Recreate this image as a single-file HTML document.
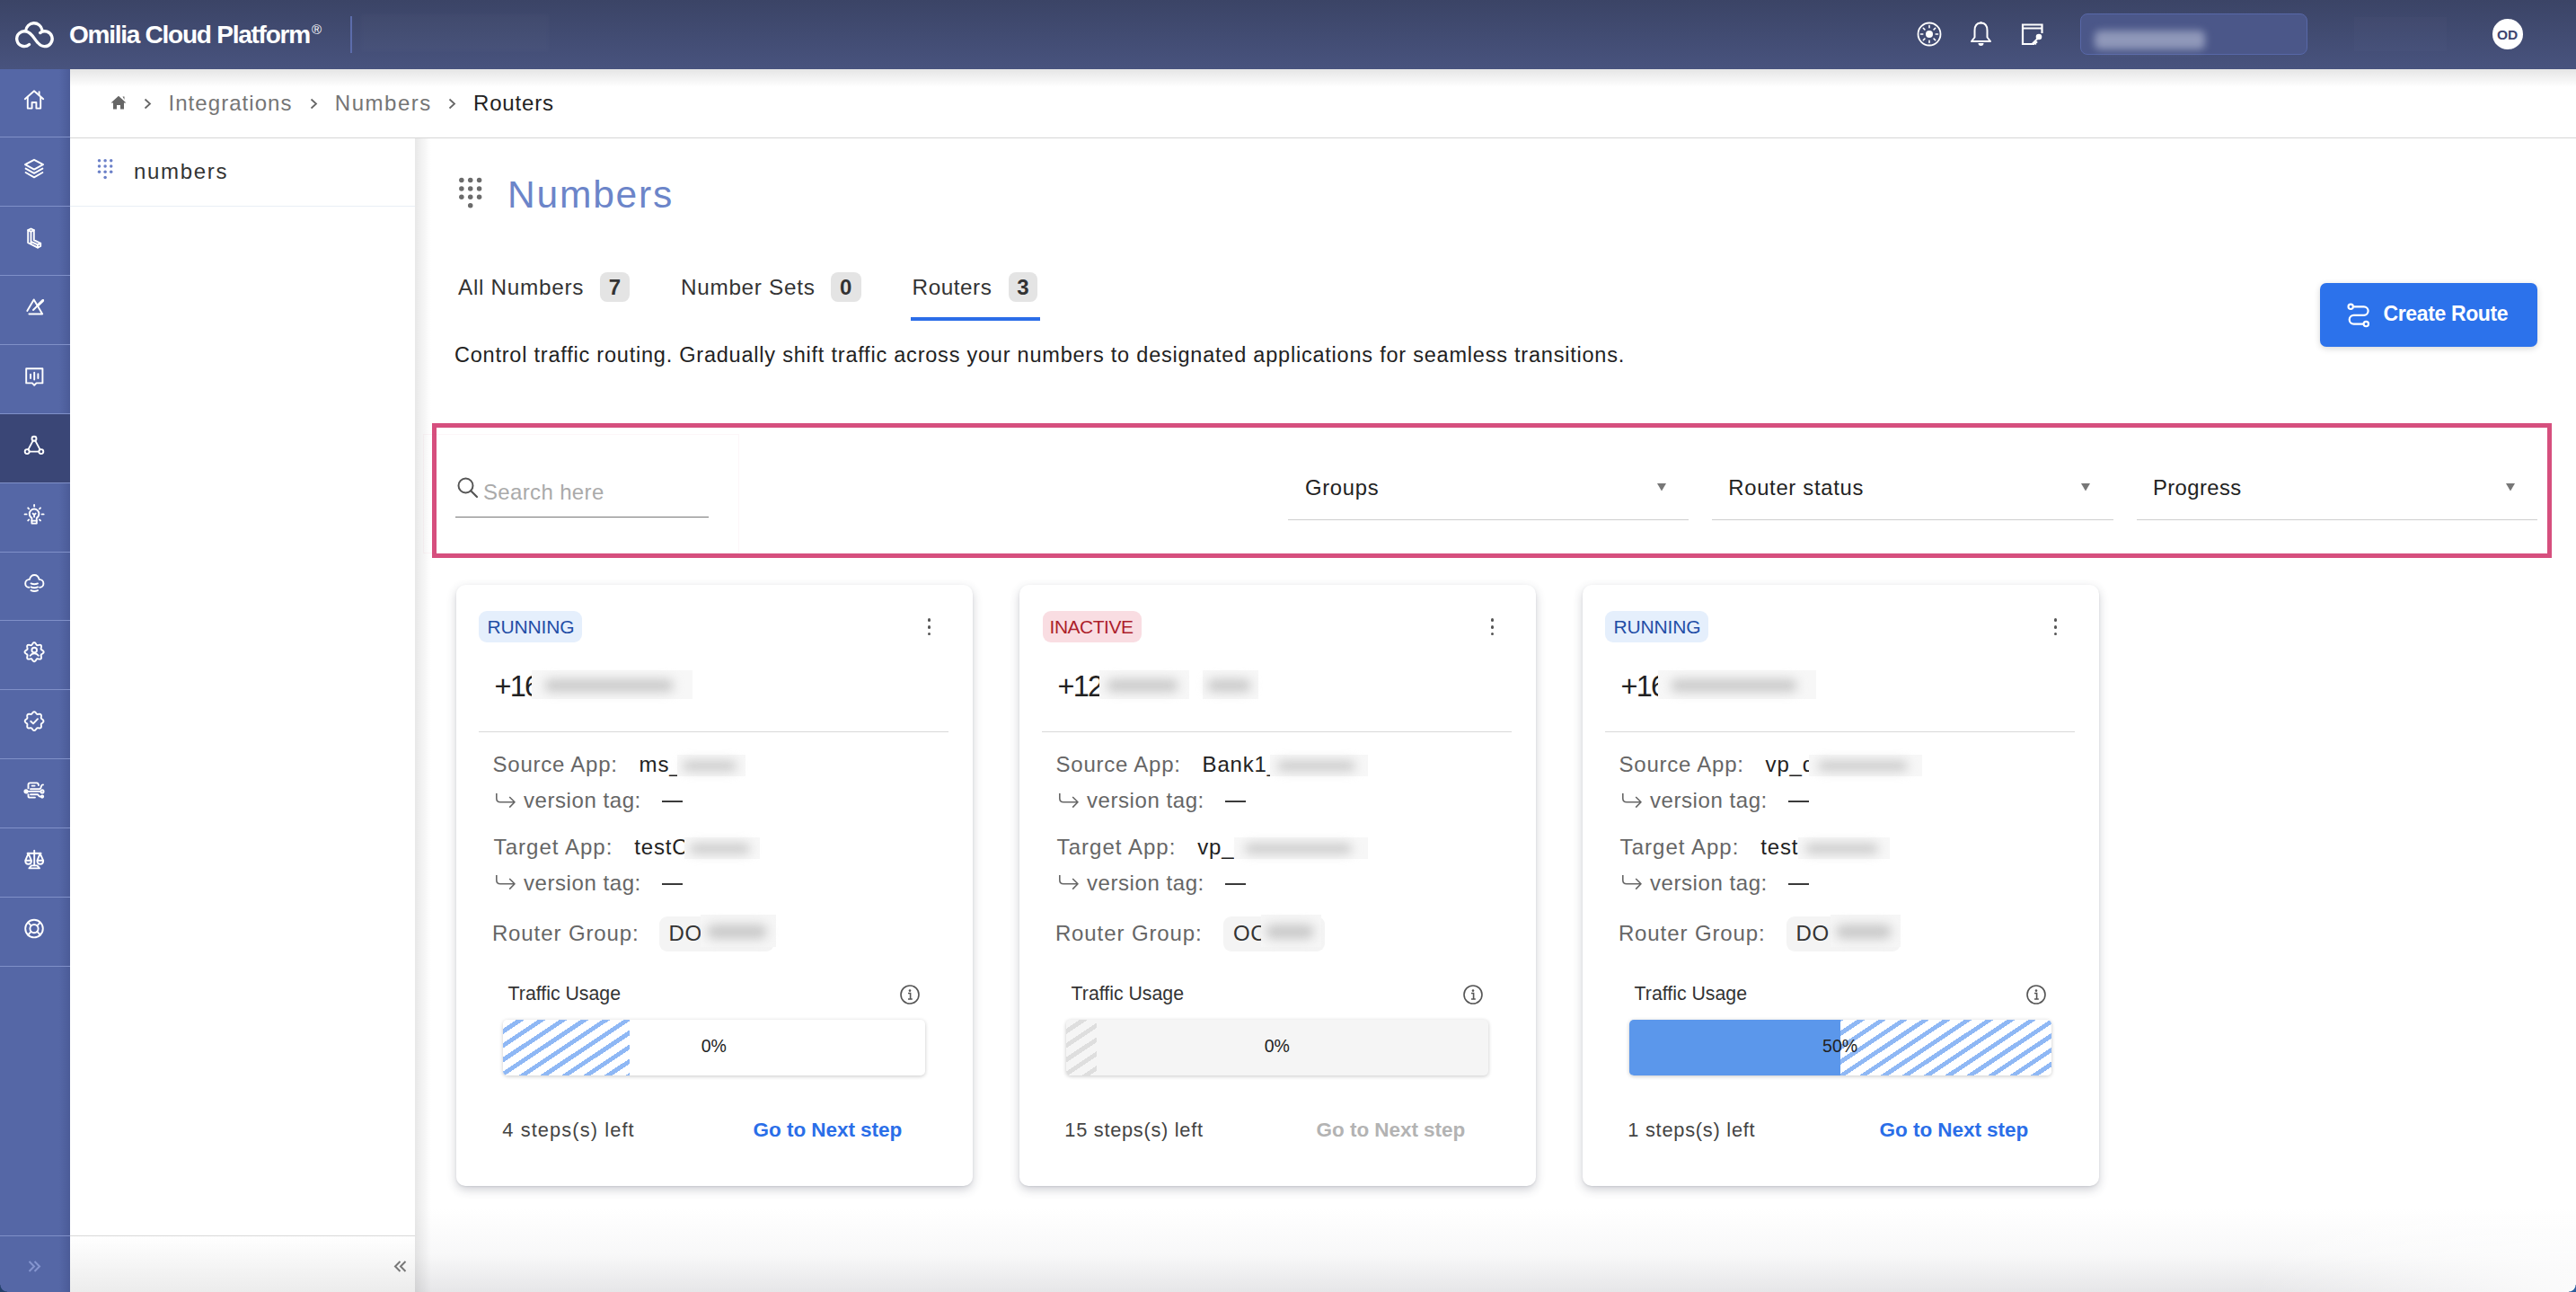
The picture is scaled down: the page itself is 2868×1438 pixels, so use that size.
<!DOCTYPE html>
<html><head><meta charset="utf-8"><style>
html,body{margin:0;padding:0;width:2868px;height:1438px;overflow:hidden;background:#fff}
body{position:relative;font-family:"Liberation Sans", sans-serif}
.t{position:absolute;white-space:nowrap;line-height:1}
.r{position:absolute}
</style></head><body>
<div class="r" style="left:462.0px;top:1345.0px;width:2406.0px;height:93.0px;background:linear-gradient(180deg,rgba(232,232,234,0) 0%,rgba(232,232,234,0.3) 55%,rgba(230,230,232,1) 100%)"></div>
<div class="r" style="left:2500.0px;top:1290.0px;width:368.0px;height:148.0px;background:radial-gradient(ellipse 360px 146px at 100% 100%,rgba(255,255,255,0.85),rgba(255,255,255,0) 100%)"></div>
<div class="r" style="left:0.0px;top:0.0px;width:2868.0px;height:77.0px;background:linear-gradient(180deg,#3b4466 0%,#48537e 100%)"></div>
<div class="r" style="left:78.0px;top:77.0px;width:2790.0px;height:20.0px;background:linear-gradient(180deg,rgba(0,0,0,0.10),rgba(0,0,0,0))"></div>
<div class="r" style="left:0.0px;top:77.0px;width:78.0px;height:1361.0px;background:#5567a6"></div>
<div class="r" style="left:66.0px;top:77.0px;width:12.0px;height:1361.0px;background:linear-gradient(90deg,rgba(40,50,100,0),rgba(40,50,100,0.22))"></div>
<div class="r" style="left:0.0px;top:152.4px;width:78.0px;height:1.0px;background:#8090c8"></div>
<div class="r" style="left:0.0px;top:229.3px;width:78.0px;height:1.0px;background:#8090c8"></div>
<div class="r" style="left:0.0px;top:306.1px;width:78.0px;height:1.0px;background:#8090c8"></div>
<div class="r" style="left:0.0px;top:383.0px;width:78.0px;height:1.0px;background:#8090c8"></div>
<div class="r" style="left:0.0px;top:459.9px;width:78.0px;height:1.0px;background:#8090c8"></div>
<div class="r" style="left:0.0px;top:461.2px;width:78.0px;height:76.9px;background:#3a4676"></div>
<div class="r" style="left:0.0px;top:536.7px;width:78.0px;height:1.0px;background:#8090c8"></div>
<div class="r" style="left:0.0px;top:613.5px;width:78.0px;height:1.0px;background:#8090c8"></div>
<div class="r" style="left:0.0px;top:690.4px;width:78.0px;height:1.0px;background:#8090c8"></div>
<div class="r" style="left:0.0px;top:767.2px;width:78.0px;height:1.0px;background:#8090c8"></div>
<div class="r" style="left:0.0px;top:844.1px;width:78.0px;height:1.0px;background:#8090c8"></div>
<div class="r" style="left:0.0px;top:921.0px;width:78.0px;height:1.0px;background:#8090c8"></div>
<div class="r" style="left:0.0px;top:997.8px;width:78.0px;height:1.0px;background:#8090c8"></div>
<div class="r" style="left:0.0px;top:1074.6px;width:78.0px;height:1.0px;background:#8090c8"></div>
<div class="r" style="left:0.0px;top:1375.0px;width:78.0px;height:1.0px;background:#8090c8"></div>
<div class="r" style="left:78.0px;top:153.0px;width:2790.0px;height:1.0px;background:#d6d6d6"></div>
<div class="r" style="left:78.0px;top:229.0px;width:384.0px;height:1.0px;background:#e9eef5"></div>
<div class="r" style="left:78.0px;top:1375.0px;width:384.0px;height:1.0px;background:#d9d9d9"></div>
<div class="r" style="left:78.0px;top:1376.0px;width:384.0px;height:62.0px;background:linear-gradient(180deg,#ffffff,#ececec)"></div>
<div class="r" style="left:462.0px;top:154.0px;width:18.0px;height:1284.0px;background:linear-gradient(90deg,rgba(0,0,0,0.09),rgba(0,0,0,0))"></div>
<div class="t" style="left:77.0px;top:24.8px;font-size:28px;color:#fff;font-weight:700;letter-spacing:-1.25px;">Omilia Cloud Platform</div>
<div class="t" style="left:347.0px;top:24.8px;font-size:15px;color:#fff;font-weight:400;letter-spacing:0.00px;">&reg;</div>
<div class="r" style="left:390.0px;top:18.0px;width:1.5px;height:40.5px;background:#5c6cab"></div>
<div class="r" style="left:402.0px;top:16.0px;width:209.0px;height:41.0px;background:rgba(255,255,255,0.02);filter:blur(2px)"></div>
<div class="r" style="left:2315.5px;top:14.7px;width:253.0px;height:45.9px;background:#4b5789;border:1px solid #5868a8;border-radius:8px;box-sizing:border-box"></div>
<div class="r" style="left:2332.0px;top:34.0px;width:123.0px;height:21.0px;background:rgba(200,205,225,0.55);filter:blur(4px);border-radius:6px"></div>
<div class="r" style="left:2621.0px;top:19.0px;width:103.0px;height:38.0px;background:rgba(255,255,255,0.015)"></div>
<div class="r" style="left:2775.2px;top:21.2px;width:33.6px;height:33.6px;background:#fff;border-radius:50%"></div>
<div class="t" style="left:2780.0px;top:31.2px;font-size:15.5px;color:#3e4670;font-weight:700;letter-spacing:0.00px;">OD</div>
<div class="t" style="left:187.5px;top:103.3px;font-size:24px;color:#757575;font-weight:400;letter-spacing:1.05px;">Integrations</div>
<div class="t" style="left:372.8px;top:103.3px;font-size:24px;color:#757575;font-weight:400;letter-spacing:1.53px;">Numbers</div>
<div class="t" style="left:527.0px;top:103.3px;font-size:24px;color:#222;font-weight:400;letter-spacing:0.83px;">Routers</div>
<div class="t" style="left:149.0px;top:179.1px;font-size:24px;color:#333;font-weight:400;letter-spacing:1.67px;">numbers</div>
<div class="t" style="left:565.0px;top:196.3px;font-size:42.5px;color:#6c85c9;font-weight:400;letter-spacing:1.80px;">Numbers</div>
<div class="t" style="left:510.0px;top:308.0px;font-size:24.3px;color:#333;font-weight:400;letter-spacing:0.70px;">All Numbers</div>
<div class="t" style="left:758.0px;top:308.0px;font-size:24.3px;color:#333;font-weight:400;letter-spacing:0.70px;">Number Sets</div>
<div class="t" style="left:1015.6px;top:308.0px;font-size:24.3px;color:#333;font-weight:400;letter-spacing:0.52px;">Routers</div>
<div class="r" style="left:668.0px;top:303.0px;width:33.0px;height:33.3px;background:#e4e4e4;border-radius:8px"></div>
<div class="t" style="left:668px;top:308.3px;width:33px;text-align:center;font-size:24px;color:#333;font-weight:700">7</div>
<div class="r" style="left:925.0px;top:303.0px;width:33.6px;height:33.3px;background:#e4e4e4;border-radius:8px"></div>
<div class="t" style="left:925px;top:308.3px;width:33.60000000000002px;text-align:center;font-size:24px;color:#333;font-weight:700">0</div>
<div class="r" style="left:1123.0px;top:303.0px;width:32.0px;height:33.3px;background:#e4e4e4;border-radius:8px"></div>
<div class="t" style="left:1123px;top:308.3px;width:32px;text-align:center;font-size:24px;color:#333;font-weight:700">3</div>
<div class="r" style="left:1014.0px;top:352.5px;width:144.0px;height:4.5px;background:#2b6de8"></div>
<div class="t" style="left:506.0px;top:384.1px;font-size:23.5px;color:#222;font-weight:400;letter-spacing:0.78px;">Control traffic routing. Gradually shift traffic across your numbers to designated applications for seamless transitions.</div>
<div class="r" style="left:2582.8px;top:315.3px;width:242.0px;height:70.3px;background:#2c72eb;border-radius:7px;box-shadow:0 2px 7px rgba(0,0,0,0.16)"></div>
<div class="t" style="left:2653.5px;top:337.5px;font-size:23px;color:#fff;font-weight:700;letter-spacing:-0.37px;">Create Route</div>
<div class="r" style="left:480.5px;top:470.6px;width:2360.7px;height:150.4px;border:5px solid #d64f7e;box-sizing:border-box"></div>
<div class="r" style="left:470.5px;top:483.0px;width:352.2px;height:133.0px;border:1px solid rgba(214,79,126,0.05);box-sizing:border-box"></div>
<div class="t" style="left:538.0px;top:536.2px;font-size:24px;color:#aaa;font-weight:400;letter-spacing:0.35px;">Search here</div>
<div class="r" style="left:507.0px;top:574.8px;width:282.0px;height:1.2px;background:#777"></div>
<div class="r" style="left:1434.0px;top:577.6px;width:446.4px;height:1.2px;background:#cfcfcf"></div>
<div class="t" style="left:1453.0px;top:530.7px;font-size:23.8px;color:#222;font-weight:400;letter-spacing:0.72px;">Groups</div>
<svg class="r" style="left:1845.4px;top:538.0px;" width="10" height="9" viewBox="0 0 10 9"><path d="M0 0 H10 L5 8.5 Z" fill="#777"/></svg>
<div class="r" style="left:1906.0px;top:577.6px;width:446.6px;height:1.2px;background:#cfcfcf"></div>
<div class="t" style="left:1924.3px;top:530.7px;font-size:23.8px;color:#222;font-weight:400;letter-spacing:0.71px;">Router status</div>
<svg class="r" style="left:2317.0px;top:538.0px;" width="10" height="9" viewBox="0 0 10 9"><path d="M0 0 H10 L5 8.5 Z" fill="#777"/></svg>
<div class="r" style="left:2379.0px;top:577.6px;width:445.8px;height:1.2px;background:#cfcfcf"></div>
<div class="t" style="left:2397.0px;top:530.7px;font-size:23.8px;color:#222;font-weight:400;letter-spacing:0.41px;">Progress</div>
<svg class="r" style="left:2790.0px;top:538.0px;" width="10" height="9" viewBox="0 0 10 9"><path d="M0 0 H10 L5 8.5 Z" fill="#777"/></svg>
<div class="r" style="left:507.6px;top:651.0px;width:575.0px;height:668.8px;background:#fff;border-radius:10px;box-shadow:0 4px 11px rgba(50,55,75,0.24), 0 1px 2px rgba(50,55,75,0.10)"></div>
<div class="r" style="left:532.9px;top:680.0px;width:115.4px;height:34.8px;background:#e5effc;border-radius:9px"></div>
<div class="t" style="left:542.6px;top:686.7px;font-size:21px;color:#1f4ea6;font-weight:400;letter-spacing:-0.17px;">RUNNING</div>
<div class="r" style="left:1032.8px;top:688.4px;width:3.6px;height:3.6px;background:#555;border-radius:50%"></div>
<div class="r" style="left:1032.8px;top:696.0px;width:3.6px;height:3.6px;background:#555;border-radius:50%"></div>
<div class="r" style="left:1032.8px;top:703.6px;width:3.6px;height:3.6px;background:#555;border-radius:50%"></div>
<div class="t" style="left:550.6px;top:748.2px;font-size:32.5px;color:#222;font-weight:400;letter-spacing:-1.80px;">+16</div>
<div class="r" style="left:592.0px;top:746.0px;width:179.2px;height:32.0px;background:#f7f7f7;overflow:hidden"></div>
<div class="r" style="left:606.3px;top:755.6px;width:143.4px;height:14.4px;background:#c9c9c9;filter:blur(6px);border-radius:10px"></div>
<div class="r" style="left:532.9px;top:814.0px;width:522.7px;height:1.2px;background:#d9d9d9"></div>
<div class="t" style="left:548.6px;top:839.4px;font-size:24px;color:#666;font-weight:400;letter-spacing:0.76px;">Source App:</div>
<div class="t" style="left:711.6px;top:839.4px;font-size:24px;color:#222;font-weight:400;letter-spacing:0.80px;">ms_</div>
<div class="r" style="left:753.6px;top:840.0px;width:76.0px;height:23.7px;background:#f7f7f7;overflow:hidden"></div>
<div class="r" style="left:759.7px;top:847.1px;width:60.8px;height:10.7px;background:#c9c9c9;filter:blur(6px);border-radius:10px"></div>
<svg class="r" style="left:550.6px;top:881.5px;" width="24" height="20" viewBox="0 0 24 20"><path d="M1.8 1 V6.5 Q1.8 10.8 6 10.8 H22 M16.2 5 L22 10.8 L16.2 16.6" fill="none" stroke="#666" stroke-width="1.6" stroke-linejoin="round"/></svg>
<div class="t" style="left:583.0px;top:879.2px;font-size:24px;color:#666;font-weight:400;letter-spacing:0.56px;">version tag:</div>
<div class="r" style="left:737.4px;top:891.3px;width:22.2px;height:1.8px;background:#3a3a3a"></div>
<svg class="r" style="left:550.6px;top:973.0px;" width="24" height="20" viewBox="0 0 24 20"><path d="M1.8 1 V6.5 Q1.8 10.8 6 10.8 H22 M16.2 5 L22 10.8 L16.2 16.6" fill="none" stroke="#666" stroke-width="1.6" stroke-linejoin="round"/></svg>
<div class="t" style="left:583.0px;top:970.7px;font-size:24px;color:#666;font-weight:400;letter-spacing:0.56px;">version tag:</div>
<div class="r" style="left:737.4px;top:982.8px;width:22.2px;height:1.8px;background:#3a3a3a"></div>
<div class="t" style="left:549.6px;top:930.7px;font-size:24px;color:#666;font-weight:400;letter-spacing:1.04px;">Target App:</div>
<div class="t" style="left:706.3px;top:930.7px;font-size:24px;color:#222;font-weight:400;letter-spacing:0.80px;">testC</div>
<div class="r" style="left:761.6px;top:932.0px;width:84.0px;height:24.0px;background:#f7f7f7;overflow:hidden"></div>
<div class="r" style="left:768.3px;top:939.2px;width:67.2px;height:10.8px;background:#c9c9c9;filter:blur(6px);border-radius:10px"></div>
<div class="t" style="left:547.9px;top:1027.3px;font-size:24px;color:#666;font-weight:400;letter-spacing:0.90px;">Router Group:</div>
<div class="r" style="left:733.6px;top:1020.0px;width:128.0px;height:39.4px;background:#f4f4f4;border-radius:9px"></div>
<div class="t" style="left:744.6px;top:1027.3px;font-size:24px;color:#333;font-weight:400;letter-spacing:0.50px;">DO</div>
<div class="r" style="left:779.8px;top:1018.0px;width:83.8px;height:35.5px;background:#f6f6f6;overflow:hidden"></div>
<div class="r" style="left:786.5px;top:1028.7px;width:67.0px;height:16.0px;background:#c9c9c9;filter:blur(6px);border-radius:10px"></div>
<div class="t" style="left:565.6px;top:1095.5px;font-size:21.3px;color:#333;font-weight:400;letter-spacing:0.00px;">Traffic Usage</div>
<svg class="r" style="left:1001.6px;top:1095.5px;" width="22" height="22" viewBox="0 0 22 22"><circle cx="11" cy="11" r="10" fill="none" stroke="#555" stroke-width="1.6"/><circle cx="11" cy="6.6" r="1.3" fill="#555"/><path d="M9 9.5 H11.6 V16 M9 16 H13.8" fill="none" stroke="#555" stroke-width="1.6"/></svg>
<div class="r" style="left:559.6px;top:1135.0px;width:470.3px;height:62.4px;background:#fff;border-radius:5px;box-shadow:0 1px 4px rgba(0,0,0,0.22);overflow:hidden"></div>
<div class="r" style="left:559.6px;top:1135.0px;width:141.0px;height:62.4px;background:repeating-linear-gradient(146.4deg,#ffffff 0px,#ffffff 8.4px,#8fb8f5 8.4px,#8fb8f5 13.2px);border-radius:5px 0 0 5px"></div>
<div class="t" style="left:744.8px;width:100px;text-align:center;top:1155.3px;font-size:19.5px;color:#222">0%</div>
<div class="t" style="left:559.3px;top:1247.4px;font-size:21.8px;color:#444;font-weight:400;letter-spacing:1.11px;">4 steps(s) left</div>
<div class="t" style="left:838.6px;top:1246.9px;font-size:22.5px;color:#2a6ee8;font-weight:700;letter-spacing:-0.05px;">Go to Next step</div>
<div class="r" style="left:1134.6px;top:651.0px;width:575.0px;height:668.8px;background:#fff;border-radius:10px;box-shadow:0 4px 11px rgba(50,55,75,0.24), 0 1px 2px rgba(50,55,75,0.10)"></div>
<div class="r" style="left:1160.6px;top:680.0px;width:110.8px;height:34.8px;background:#f9dde2;border-radius:9px"></div>
<div class="t" style="left:1168.6px;top:686.7px;font-size:21px;color:#ad1f2b;font-weight:400;letter-spacing:-0.50px;">INACTIVE</div>
<div class="r" style="left:1659.8px;top:688.4px;width:3.6px;height:3.6px;background:#555;border-radius:50%"></div>
<div class="r" style="left:1659.8px;top:696.0px;width:3.6px;height:3.6px;background:#555;border-radius:50%"></div>
<div class="r" style="left:1659.8px;top:703.6px;width:3.6px;height:3.6px;background:#555;border-radius:50%"></div>
<div class="t" style="left:1177.6px;top:748.2px;font-size:32.5px;color:#222;font-weight:400;letter-spacing:-1.80px;">+12</div>
<div class="r" style="left:1223.6px;top:746.0px;width:100.0px;height:32.0px;background:#f7f7f7;overflow:hidden"></div>
<div class="r" style="left:1231.6px;top:755.6px;width:80.0px;height:14.4px;background:#c9c9c9;filter:blur(6px);border-radius:10px"></div>
<div class="r" style="left:1338.6px;top:746.0px;width:62.0px;height:32.0px;background:#f7f7f7;overflow:hidden"></div>
<div class="r" style="left:1343.6px;top:755.6px;width:49.6px;height:14.4px;background:#c9c9c9;filter:blur(6px);border-radius:10px"></div>
<div class="r" style="left:1159.9px;top:814.0px;width:522.7px;height:1.2px;background:#d9d9d9"></div>
<div class="t" style="left:1175.6px;top:839.4px;font-size:24px;color:#666;font-weight:400;letter-spacing:0.76px;">Source App:</div>
<div class="t" style="left:1338.6px;top:839.4px;font-size:24px;color:#222;font-weight:400;letter-spacing:0.80px;">Bank1_</div>
<div class="r" style="left:1413.6px;top:840.0px;width:109.0px;height:23.7px;background:#f7f7f7;overflow:hidden"></div>
<div class="r" style="left:1422.3px;top:847.1px;width:87.2px;height:10.7px;background:#c9c9c9;filter:blur(6px);border-radius:10px"></div>
<svg class="r" style="left:1177.6px;top:881.5px;" width="24" height="20" viewBox="0 0 24 20"><path d="M1.8 1 V6.5 Q1.8 10.8 6 10.8 H22 M16.2 5 L22 10.8 L16.2 16.6" fill="none" stroke="#666" stroke-width="1.6" stroke-linejoin="round"/></svg>
<div class="t" style="left:1210.0px;top:879.2px;font-size:24px;color:#666;font-weight:400;letter-spacing:0.56px;">version tag:</div>
<div class="r" style="left:1364.4px;top:891.3px;width:22.2px;height:1.8px;background:#3a3a3a"></div>
<svg class="r" style="left:1177.6px;top:973.0px;" width="24" height="20" viewBox="0 0 24 20"><path d="M1.8 1 V6.5 Q1.8 10.8 6 10.8 H22 M16.2 5 L22 10.8 L16.2 16.6" fill="none" stroke="#666" stroke-width="1.6" stroke-linejoin="round"/></svg>
<div class="t" style="left:1210.0px;top:970.7px;font-size:24px;color:#666;font-weight:400;letter-spacing:0.56px;">version tag:</div>
<div class="r" style="left:1364.4px;top:982.8px;width:22.2px;height:1.8px;background:#3a3a3a"></div>
<div class="t" style="left:1176.6px;top:930.7px;font-size:24px;color:#666;font-weight:400;letter-spacing:1.04px;">Target App:</div>
<div class="t" style="left:1333.3px;top:930.7px;font-size:24px;color:#222;font-weight:400;letter-spacing:0.80px;">vp_</div>
<div class="r" style="left:1373.6px;top:932.0px;width:149.0px;height:24.0px;background:#f7f7f7;overflow:hidden"></div>
<div class="r" style="left:1385.5px;top:939.2px;width:119.2px;height:10.8px;background:#c9c9c9;filter:blur(6px);border-radius:10px"></div>
<div class="t" style="left:1174.9px;top:1027.3px;font-size:24px;color:#666;font-weight:400;letter-spacing:0.90px;">Router Group:</div>
<div class="r" style="left:1362.1px;top:1020.0px;width:112.5px;height:39.4px;background:#f4f4f4;border-radius:9px"></div>
<div class="t" style="left:1373.1px;top:1027.3px;font-size:24px;color:#333;font-weight:400;letter-spacing:0.50px;">OC</div>
<div class="r" style="left:1403.6px;top:1018.0px;width:67.0px;height:35.5px;background:#f6f6f6;overflow:hidden"></div>
<div class="r" style="left:1409.0px;top:1028.7px;width:53.6px;height:16.0px;background:#c9c9c9;filter:blur(6px);border-radius:10px"></div>
<div class="t" style="left:1192.6px;top:1095.5px;font-size:21.3px;color:#333;font-weight:400;letter-spacing:0.00px;">Traffic Usage</div>
<svg class="r" style="left:1628.6px;top:1095.5px;" width="22" height="22" viewBox="0 0 22 22"><circle cx="11" cy="11" r="10" fill="none" stroke="#555" stroke-width="1.6"/><circle cx="11" cy="6.6" r="1.3" fill="#555"/><path d="M9 9.5 H11.6 V16 M9 16 H13.8" fill="none" stroke="#555" stroke-width="1.6"/></svg>
<div class="r" style="left:1186.6px;top:1135.0px;width:470.3px;height:62.4px;background:#f5f5f5;border-radius:5px;box-shadow:0 1px 4px rgba(0,0,0,0.22)"></div>
<div class="r" style="left:1186.6px;top:1135.0px;width:34.0px;height:62.4px;background:repeating-linear-gradient(146.4deg,#f5f5f5 0px,#f5f5f5 8.4px,#dedede 8.4px,#dedede 13.2px);border-radius:5px 0 0 5px"></div>
<div class="t" style="left:1371.8px;width:100px;text-align:center;top:1155.3px;font-size:19.5px;color:#222">0%</div>
<div class="t" style="left:1185.3px;top:1247.4px;font-size:21.8px;color:#444;font-weight:400;letter-spacing:0.72px;">15 steps(s) left</div>
<div class="t" style="left:1465.6px;top:1246.9px;font-size:22.5px;color:#b3b3b3;font-weight:700;letter-spacing:-0.05px;">Go to Next step</div>
<div class="r" style="left:1761.6px;top:651.0px;width:575.0px;height:668.8px;background:#fff;border-radius:10px;box-shadow:0 4px 11px rgba(50,55,75,0.24), 0 1px 2px rgba(50,55,75,0.10)"></div>
<div class="r" style="left:1786.9px;top:680.0px;width:115.4px;height:34.8px;background:#e5effc;border-radius:9px"></div>
<div class="t" style="left:1796.6px;top:686.7px;font-size:21px;color:#1f4ea6;font-weight:400;letter-spacing:-0.17px;">RUNNING</div>
<div class="r" style="left:2286.8px;top:688.4px;width:3.6px;height:3.6px;background:#555;border-radius:50%"></div>
<div class="r" style="left:2286.8px;top:696.0px;width:3.6px;height:3.6px;background:#555;border-radius:50%"></div>
<div class="r" style="left:2286.8px;top:703.6px;width:3.6px;height:3.6px;background:#555;border-radius:50%"></div>
<div class="t" style="left:1804.6px;top:748.2px;font-size:32.5px;color:#222;font-weight:400;letter-spacing:-1.80px;">+16</div>
<div class="r" style="left:1846.0px;top:746.0px;width:176.0px;height:32.0px;background:#f7f7f7;overflow:hidden"></div>
<div class="r" style="left:1860.1px;top:755.6px;width:140.8px;height:14.4px;background:#c9c9c9;filter:blur(6px);border-radius:10px"></div>
<div class="r" style="left:1786.9px;top:814.0px;width:522.7px;height:1.2px;background:#d9d9d9"></div>
<div class="t" style="left:1802.6px;top:839.4px;font-size:24px;color:#666;font-weight:400;letter-spacing:0.76px;">Source App:</div>
<div class="t" style="left:1965.6px;top:839.4px;font-size:24px;color:#222;font-weight:400;letter-spacing:0.80px;">vp_d</div>
<div class="r" style="left:2013.6px;top:840.0px;width:126.0px;height:23.7px;background:#f7f7f7;overflow:hidden"></div>
<div class="r" style="left:2023.7px;top:847.1px;width:100.8px;height:10.7px;background:#c9c9c9;filter:blur(6px);border-radius:10px"></div>
<svg class="r" style="left:1804.6px;top:881.5px;" width="24" height="20" viewBox="0 0 24 20"><path d="M1.8 1 V6.5 Q1.8 10.8 6 10.8 H22 M16.2 5 L22 10.8 L16.2 16.6" fill="none" stroke="#666" stroke-width="1.6" stroke-linejoin="round"/></svg>
<div class="t" style="left:1837.0px;top:879.2px;font-size:24px;color:#666;font-weight:400;letter-spacing:0.56px;">version tag:</div>
<div class="r" style="left:1991.4px;top:891.3px;width:22.2px;height:1.8px;background:#3a3a3a"></div>
<svg class="r" style="left:1804.6px;top:973.0px;" width="24" height="20" viewBox="0 0 24 20"><path d="M1.8 1 V6.5 Q1.8 10.8 6 10.8 H22 M16.2 5 L22 10.8 L16.2 16.6" fill="none" stroke="#666" stroke-width="1.6" stroke-linejoin="round"/></svg>
<div class="t" style="left:1837.0px;top:970.7px;font-size:24px;color:#666;font-weight:400;letter-spacing:0.56px;">version tag:</div>
<div class="r" style="left:1991.4px;top:982.8px;width:22.2px;height:1.8px;background:#3a3a3a"></div>
<div class="t" style="left:1803.6px;top:930.7px;font-size:24px;color:#666;font-weight:400;letter-spacing:1.04px;">Target App:</div>
<div class="t" style="left:1960.3px;top:930.7px;font-size:24px;color:#222;font-weight:400;letter-spacing:0.80px;">test</div>
<div class="r" style="left:2001.6px;top:932.0px;width:102.0px;height:24.0px;background:#f7f7f7;overflow:hidden"></div>
<div class="r" style="left:2009.8px;top:939.2px;width:81.6px;height:10.8px;background:#c9c9c9;filter:blur(6px);border-radius:10px"></div>
<div class="t" style="left:1801.9px;top:1027.3px;font-size:24px;color:#666;font-weight:400;letter-spacing:0.90px;">Router Group:</div>
<div class="r" style="left:1988.6px;top:1020.0px;width:127.0px;height:39.4px;background:#f4f4f4;border-radius:9px"></div>
<div class="t" style="left:1999.6px;top:1027.3px;font-size:24px;color:#333;font-weight:400;letter-spacing:0.50px;">DO</div>
<div class="r" style="left:2037.6px;top:1018.0px;width:78.0px;height:35.5px;background:#f6f6f6;overflow:hidden"></div>
<div class="r" style="left:2043.8px;top:1028.7px;width:62.4px;height:16.0px;background:#c9c9c9;filter:blur(6px);border-radius:10px"></div>
<div class="t" style="left:1819.6px;top:1095.5px;font-size:21.3px;color:#333;font-weight:400;letter-spacing:0.00px;">Traffic Usage</div>
<svg class="r" style="left:2255.6px;top:1095.5px;" width="22" height="22" viewBox="0 0 22 22"><circle cx="11" cy="11" r="10" fill="none" stroke="#555" stroke-width="1.6"/><circle cx="11" cy="6.6" r="1.3" fill="#555"/><path d="M9 9.5 H11.6 V16 M9 16 H13.8" fill="none" stroke="#555" stroke-width="1.6"/></svg>
<div class="r" style="left:1813.6px;top:1135.0px;width:470.3px;height:62.4px;background:repeating-linear-gradient(146.4deg,#ffffff 0px,#ffffff 8.4px,#8fb8f5 8.4px,#8fb8f5 13.2px);border-radius:5px;box-shadow:0 1px 4px rgba(0,0,0,0.22)"></div>
<div class="r" style="left:1813.6px;top:1135.0px;width:235.0px;height:62.4px;background:#5b97eb;border-radius:5px 0 0 5px"></div>
<div class="t" style="left:1998.6px;width:100px;text-align:center;top:1155.3px;font-size:19.5px;color:#222">50%</div>
<div class="t" style="left:1812.3px;top:1247.4px;font-size:21.8px;color:#444;font-weight:400;letter-spacing:0.75px;">1 steps(s) left</div>
<div class="t" style="left:2092.6px;top:1246.9px;font-size:22.5px;color:#2a6ee8;font-weight:700;letter-spacing:-0.05px;">Go to Next step</div>
<svg class="r" style="left:0.0px;top:0.0px;" width="78" height="77" viewBox="0 0 78 77"><g fill="none" stroke="#fff" stroke-width="3.3" stroke-linecap="round"><path d="M32.6 49.6 A8.4 8.4 0 1 1 29.6 35.2 C35.5 36.5 38 43.5 42 47.5 C44.5 50.2 47 51.6 49.3 51.6 A8.4 8.4 0 1 0 44.6 36.6"/><path d="M28.7 34.2 A9.2 9.2 0 0 1 46.9 33.2"/></g></svg>
<svg class="r" style="left:26.0px;top:99.4px;overflow:visible" width="24" height="24" viewBox="0 0 24 24"><g fill="none" stroke="#fff" stroke-width="1.9" stroke-linecap="round" stroke-linejoin="round"><path d="M1.8 11.2 L12 2.2 L22.2 11.2"/><path d="M4.8 8.8 V21.6 H9.6 V15 H14.4 V21.6 H19.2 V8.8"/><path d="M17.6 3.2 V6.8"/></g></svg>
<svg class="r" style="left:26.0px;top:176.3px;overflow:visible" width="24" height="24" viewBox="0 0 24 24"><g fill="none" stroke="#fff" stroke-width="1.9" stroke-linecap="round" stroke-linejoin="round"><path d="M12 1.8 L22 7.2 L12 12.6 L2 7.2 Z"/><path d="M2.6 11.6 L12 16.8 L21.4 11.6"/><path d="M2.6 16 L12 21.4 L21.4 16"/></g></svg>
<svg class="r" style="left:26.0px;top:253.1px;overflow:visible" width="24" height="24" viewBox="0 0 24 24"><g fill="none" stroke="#fff" stroke-width="1.9" stroke-linecap="round" stroke-linejoin="round"><path d="M5.2 3.2 L8.5 1.5 L11.8 3.2 V14.2 L19.2 17.8 V21 L16 22.6 L5.2 17.2 Z"/><path d="M5.2 3.2 L8.5 4.9 V17.6 M8.5 4.9 L11.8 3.2 M16 22.6 V19.4 L19.2 17.8 M16 19.4 L8.5 15.8"/></g></svg>
<svg class="r" style="left:26.0px;top:330.0px;overflow:visible" width="24" height="24" viewBox="0 0 24 24"><g fill="none" stroke="#fff" stroke-width="1.9" stroke-linecap="round" stroke-linejoin="round"><path d="M4.3 16 L11.7 3.4 L21.2 19.5 H6.4"/><path d="M11 15 L22.1 4.1"/><path d="M16.5 9.5 L21.6 4.6" stroke-width="3"/></g></svg>
<svg class="r" style="left:26.0px;top:406.8px;overflow:visible" width="24" height="24" viewBox="0 0 24 24"><g fill="none" stroke="#fff" stroke-width="1.9" stroke-linecap="round" stroke-linejoin="round"><path d="M3.2 3.2 H21.4 V19.4 H14.5 L12.2 21.8 L9.9 19.4 H3.2 Z"/><path d="M8 9.6 V14 M12.2 7.6 V15.6 M16.4 9.2 V14"/></g></svg>
<svg class="r" style="left:26.0px;top:483.7px;overflow:visible" width="24" height="24" viewBox="0 0 24 24"><g fill="none" stroke="#fff" stroke-width="1.9" stroke-linecap="round" stroke-linejoin="round"><circle cx="12" cy="4.2" r="2.5"/><circle cx="4.2" cy="18.6" r="2.5"/><circle cx="19.8" cy="18.6" r="2.5"/><path d="M10.8 6.4 L5.4 16.4 M13.2 6.4 L18.6 16.4 M6.7 18.6 H17.3"/></g></svg>
<svg class="r" style="left:26.0px;top:560.5px;overflow:visible" width="24" height="24" viewBox="0 0 24 24"><g fill="none" stroke="#fff" stroke-width="1.9" stroke-linecap="round" stroke-linejoin="round"><path d="M9.4 15.6 C7.6 14.4 6.8 12.6 6.8 10.8 A5.3 5.3 0 0 1 17.4 10.8 C17.4 12.6 16.6 14.4 14.8 15.6 V21.6 H9.4 Z"/><path d="M9.4 18.6 H14.8"/><path d="M10.6 10.6 L12.1 12 L13.6 10.6 M12.1 12 V14.2"/><path d="M12.1 1 V2.6 M5.2 4.3 L6.2 5.3 M19 4.3 L18 5.3 M1.6 11.4 H3.6 M20.6 11.4 H22.6 M5.2 18.4 L6.2 17.4 M19 18.4 L18 17.4"/></g></svg>
<svg class="r" style="left:26.0px;top:637.4px;overflow:visible" width="24" height="24" viewBox="0 0 24 24"><g fill="none" stroke="#fff" stroke-width="1.9" stroke-linecap="round" stroke-linejoin="round"><path d="M6.4 16.8 C3.6 16.8 2.2 14.6 2.2 12.4 C2.2 9.8 4.2 7.9 6.9 7.9 C7.8 4.6 9.8 3 12.3 3 C14.8 3 16.8 4.6 17.7 7.9 C20.4 7.9 22.4 9.8 22.4 12.4 C22.4 14.6 20.9 16.8 18.2 16.8"/><path d="M8.5 12.4 Q12.3 14.2 16 12.4 M8.5 16.3 Q12.3 18.1 16 16.3 M8.5 20.1 Q12.3 21.9 16 20.1"/></g></svg>
<svg class="r" style="left:26.0px;top:714.2px;overflow:visible" width="24" height="24" viewBox="0 0 24 24"><g fill="none" stroke="#fff" stroke-width="1.9" stroke-linecap="round" stroke-linejoin="round"><path d="M22.70 11.70 L22.52 12.38 L22.01 13.01 L21.32 13.53 L20.60 13.98 L20.02 14.39 L19.68 14.84 L19.60 15.40 L19.72 16.10 L19.92 16.92 L20.03 17.79 L19.95 18.58 L19.60 19.20 L18.98 19.55 L18.19 19.63 L17.32 19.52 L16.50 19.32 L15.80 19.20 L15.24 19.28 L14.79 19.62 L14.38 20.20 L13.93 20.92 L13.41 21.61 L12.78 22.12 L12.10 22.30 L11.42 22.12 L10.79 21.61 L10.27 20.92 L9.82 20.20 L9.41 19.62 L8.96 19.28 L8.40 19.20 L7.70 19.32 L6.88 19.52 L6.01 19.63 L5.22 19.55 L4.60 19.20 L4.25 18.58 L4.17 17.79 L4.28 16.92 L4.48 16.10 L4.60 15.40 L4.52 14.84 L4.18 14.39 L3.60 13.98 L2.88 13.53 L2.19 13.01 L1.68 12.38 L1.50 11.70 L1.68 11.02 L2.19 10.39 L2.88 9.87 L3.60 9.42 L4.18 9.01 L4.52 8.56 L4.60 8.00 L4.48 7.30 L4.28 6.48 L4.17 5.61 L4.25 4.82 L4.60 4.20 L5.22 3.85 L6.01 3.77 L6.88 3.88 L7.70 4.08 L8.40 4.20 L8.96 4.12 L9.41 3.78 L9.82 3.20 L10.27 2.48 L10.79 1.79 L11.42 1.28 L12.10 1.10 L12.78 1.28 L13.41 1.79 L13.93 2.48 L14.38 3.20 L14.79 3.78 L15.24 4.12 L15.80 4.20 L16.50 4.08 L17.32 3.88 L18.19 3.77 L18.98 3.85 L19.60 4.20 L19.95 4.82 L20.03 5.61 L19.92 6.48 L19.72 7.30 L19.60 8.00 L19.68 8.56 L20.02 9.01 L20.60 9.42 L21.32 9.87 L22.01 10.39 L22.52 11.02 Z"/><circle cx="12.2" cy="9.5" r="2.8"/><path d="M7.6 15.8 C8.8 14 10.3 13.2 12.2 13.2 C14.1 13.2 15.6 14 16.8 15.8"/></g></svg>
<svg class="r" style="left:26.0px;top:791.1px;overflow:visible" width="24" height="24" viewBox="0 0 24 24"><g fill="none" stroke="#fff" stroke-width="1.9" stroke-linecap="round" stroke-linejoin="round"><path d="M22.50 11.60 L22.34 12.27 L21.92 12.89 L21.32 13.43 L20.70 13.90 L20.18 14.34 L19.86 14.81 L19.75 15.37 L19.81 16.05 L19.92 16.82 L19.95 17.63 L19.82 18.37 L19.45 18.95 L18.87 19.32 L18.13 19.45 L17.32 19.42 L16.55 19.31 L15.87 19.25 L15.31 19.36 L14.84 19.68 L14.40 20.20 L13.93 20.82 L13.39 21.42 L12.77 21.84 L12.10 22.00 L11.43 21.84 L10.81 21.42 L10.27 20.82 L9.80 20.20 L9.36 19.68 L8.89 19.36 L8.33 19.25 L7.65 19.31 L6.88 19.42 L6.07 19.45 L5.33 19.32 L4.75 18.95 L4.38 18.37 L4.25 17.63 L4.28 16.82 L4.39 16.05 L4.45 15.37 L4.34 14.81 L4.02 14.34 L3.50 13.90 L2.88 13.43 L2.28 12.89 L1.86 12.27 L1.70 11.60 L1.86 10.93 L2.28 10.31 L2.88 9.77 L3.50 9.30 L4.02 8.86 L4.34 8.39 L4.45 7.83 L4.39 7.15 L4.28 6.38 L4.25 5.57 L4.38 4.83 L4.75 4.25 L5.33 3.88 L6.07 3.75 L6.88 3.78 L7.65 3.89 L8.33 3.95 L8.89 3.84 L9.36 3.52 L9.80 3.00 L10.27 2.38 L10.81 1.78 L11.43 1.36 L12.10 1.20 L12.77 1.36 L13.39 1.78 L13.93 2.38 L14.40 3.00 L14.84 3.52 L15.31 3.84 L15.87 3.95 L16.55 3.89 L17.32 3.78 L18.13 3.75 L18.87 3.88 L19.45 4.25 L19.82 4.83 L19.95 5.57 L19.92 6.38 L19.81 7.15 L19.75 7.83 L19.86 8.39 L20.18 8.86 L20.70 9.30 L21.32 9.77 L21.92 10.31 L22.34 10.93 Z"/><path d="M8.2 11.8 L11 14.4 L16 9.2"/></g></svg>
<svg class="r" style="left:26.0px;top:867.9px;overflow:visible" width="24" height="24" viewBox="0 0 24 24"><g fill="none" stroke="#fff" stroke-width="1.9" stroke-linecap="round" stroke-linejoin="round"><path d="M5.5 9.4 V5.6 C5.5 4.2 6.3 3.4 7.6 3.4 H15 C16.2 3.4 16.8 4.6 17 6"/><path d="M9.6 6.6 H12.6"/><circle cx="3" cy="12.9" r="1.6" fill="#fff"/><path d="M3 12.9 H19.4"/><circle cx="21" cy="12.9" r="1.6"/><path d="M8 10.2 H17.6 C19 10.2 19.4 9.4 19.8 7.6 C20.2 5.8 20.8 5.4 22 5.4"/><path d="M5.5 16.2 V18.2 C5.5 19.2 6.1 19.6 7.2 19.6 H13"/><path d="M8 16.3 H15.6 C16.8 16.3 17.2 18.6 18.6 18.6 H19.8"/><circle cx="21" cy="18.6" r="1.2"/></g></svg>
<svg class="r" style="left:26.0px;top:944.8px;overflow:visible" width="24" height="24" viewBox="0 0 24 24"><g fill="none" stroke="#fff" stroke-width="1.9" stroke-linecap="round" stroke-linejoin="round"><path d="M12.2 1.6 V18.2 M4.6 4.8 H19.6"/><path d="M5.6 4.8 L2.2 12.8 C2.2 15.6 3.6 16.8 5.6 16.8 C7.6 16.8 9 15.6 9 12.8 Z M2.6 12.8 H8.6"/><path d="M18.6 4.8 L15.4 12.8 C15.4 15.6 16.8 16.8 18.8 16.8 C20.8 16.8 22.2 15.6 22.2 12.8 Z M15.8 12.8 H21.8"/><path d="M6.4 21.4 L9 18.4 H15.4 L18 21.4 Z"/></g></svg>
<svg class="r" style="left:26.0px;top:1021.6px;overflow:visible" width="24" height="24" viewBox="0 0 24 24"><g fill="none" stroke="#fff" stroke-width="1.9" stroke-linecap="round" stroke-linejoin="round"><circle cx="12" cy="11.6" r="9.8"/><circle cx="12" cy="11.6" r="4.6"/><path d="M5.1 4.7 L8.7 8.3 M18.9 4.7 L15.3 8.3 M5.1 18.5 L8.7 14.9 M18.9 18.5 L15.3 14.9"/></g></svg>
<svg class="r" style="left:31.0px;top:1403.0px;" width="15" height="13" viewBox="0 0 15 13"><path d="M1.5 1 L7 6.5 L1.5 12 M7.5 1 L13 6.5 L7.5 12" fill="none" stroke="#8595cf" stroke-width="2"/></svg>
<svg class="r" style="left:437.5px;top:1403.0px;" width="15" height="13" viewBox="0 0 15 13"><path d="M13.5 1 L8 6.5 L13.5 12 M7.5 1 L2 6.5 L7.5 12" fill="none" stroke="#777" stroke-width="2"/></svg>
<svg class="r" style="left:2134.0px;top:24.0px;" width="28" height="28" viewBox="0 0 28 28"><circle cx="14" cy="14" r="12.5" fill="none" stroke="#fff" stroke-width="1.8"/><circle cx="14" cy="14" r="4" fill="#fff"/><path d="M14 4.5 V6.8 M14 21.2 V23.5 M4.5 14 H6.8 M21.2 14 H23.5 M7.3 7.3 L8.9 8.9 M19.1 19.1 L20.7 20.7 M7.3 20.7 L8.9 19.1 M19.1 8.9 L20.7 7.3" stroke="#fff" stroke-width="1.6" stroke-linecap="round"/></svg>
<svg class="r" style="left:2192.0px;top:23.0px;" width="27" height="30" viewBox="0 0 27 30"><path d="M13.5 2.5 C8.5 2.5 6.5 6.5 6.5 11 V18.5 L3 23 H24 L20.5 18.5 V11 C20.5 6.5 18.5 2.5 13.5 2.5 Z" fill="none" stroke="#fff" stroke-width="2" stroke-linejoin="round"/><path d="M10.5 25 A3 3 0 0 0 16.5 25 Z" fill="#fff"/><circle cx="13.5" cy="2.3" r="1.2" fill="#fff"/></svg>
<svg class="r" style="left:2249.0px;top:25.0px;" width="28" height="26" viewBox="0 0 28 26"><path d="M16 24 H3 V2.5 H24.5 V12" fill="none" stroke="#fff" stroke-width="2.2"/><path d="M3 6.5 H24.5" stroke="#fff" stroke-width="2"/><circle cx="21" cy="16" r="3.3" fill="#fff"/><path d="M19 18.5 L13.5 24 M15.5 22 L17.3 23.8 M17 20.5 L18.5 22" stroke="#fff" stroke-width="2" stroke-linecap="round"/></svg>
<svg class="r" style="left:123.0px;top:106.0px;" width="18" height="16" viewBox="0 0 18 16"><path d="M9 0.8 L17.5 8.5 H15 V15.5 H11 V11 H7 V15.5 H3 V8.5 H0.5 Z" fill="#666"/><path d="M13.5 1.5 H15.5 V5" fill="#666"/></svg>
<svg class="r" style="left:160.0px;top:109.0px;" width="9" height="13" viewBox="0 0 9 13"><path d="M1.5 1.5 L7 6.5 L1.5 11.5" fill="none" stroke="#666" stroke-width="1.8"/></svg>
<svg class="r" style="left:344.6px;top:109.0px;" width="9" height="13" viewBox="0 0 9 13"><path d="M1.5 1.5 L7 6.5 L1.5 11.5" fill="none" stroke="#666" stroke-width="1.8"/></svg>
<svg class="r" style="left:499.0px;top:109.0px;" width="9" height="13" viewBox="0 0 9 13"><path d="M1.5 1.5 L7 6.5 L1.5 11.5" fill="none" stroke="#666" stroke-width="1.8"/></svg>
<svg class="r" style="left:0;top:0" width="2868" height="260"><circle cx="110.50" cy="178.70" r="1.75" fill="#6b80c8"/><circle cx="117.10" cy="178.70" r="1.75" fill="#6b80c8"/><circle cx="123.70" cy="178.70" r="1.75" fill="#6b80c8"/><circle cx="110.50" cy="185.00" r="1.75" fill="#6b80c8"/><circle cx="117.10" cy="185.00" r="1.75" fill="#6b80c8"/><circle cx="123.70" cy="185.00" r="1.75" fill="#6b80c8"/><circle cx="110.50" cy="191.30" r="1.75" fill="#6b80c8"/><circle cx="117.10" cy="191.30" r="1.75" fill="#6b80c8"/><circle cx="123.70" cy="191.30" r="1.75" fill="#6b80c8"/><circle cx="117.10" cy="197.60" r="1.75" fill="#6b80c8"/></svg>
<svg class="r" style="left:0;top:0" width="2868" height="260"><circle cx="513.85" cy="200.50" r="2.75" fill="#6b6b6b"/><circle cx="523.72" cy="200.50" r="2.75" fill="#6b6b6b"/><circle cx="533.59" cy="200.50" r="2.75" fill="#6b6b6b"/><circle cx="513.85" cy="209.90" r="2.75" fill="#6b6b6b"/><circle cx="523.72" cy="209.90" r="2.75" fill="#6b6b6b"/><circle cx="533.59" cy="209.90" r="2.75" fill="#6b6b6b"/><circle cx="513.85" cy="219.30" r="2.75" fill="#6b6b6b"/><circle cx="523.72" cy="219.30" r="2.75" fill="#6b6b6b"/><circle cx="533.59" cy="219.30" r="2.75" fill="#6b6b6b"/><circle cx="523.72" cy="228.70" r="2.75" fill="#6b6b6b"/></svg>
<svg class="r" style="left:509.0px;top:531.0px;" width="24" height="24" viewBox="0 0 24 24"><circle cx="9.5" cy="9.5" r="8" fill="none" stroke="#555" stroke-width="2"/><path d="M15.2 15.2 L22 22" stroke="#555" stroke-width="2.2" stroke-linecap="round"/></svg>
<svg class="r" style="left:2611.0px;top:335.0px;" width="29" height="31" viewBox="0 0 29 31"><circle cx="6.2" cy="6.3" r="2.7" fill="none" stroke="#fff" stroke-width="2.1"/><circle cx="23.3" cy="25.6" r="2.7" fill="none" stroke="#fff" stroke-width="2.1"/><path d="M9.6 6.4 H20.9 A4.7 4.7 0 0 1 20.9 15.8 H9.6 A4.9 4.9 0 0 0 9.6 25.6 H20.2" fill="none" stroke="#fff" stroke-width="2.2"/></svg>
<div class="r" style="left:2860.0px;top:1430.0px;width:8.0px;height:8.0px;background:radial-gradient(circle at 0 0, rgba(0,0,0,0) 7px, #2a5c9c 8px)"></div>
<div class="r" style="left:0.0px;top:1430.0px;width:8.0px;height:8.0px;background:radial-gradient(circle at 100% 0, rgba(0,0,0,0) 7px, #23406a 8px)"></div>
</body></html>
